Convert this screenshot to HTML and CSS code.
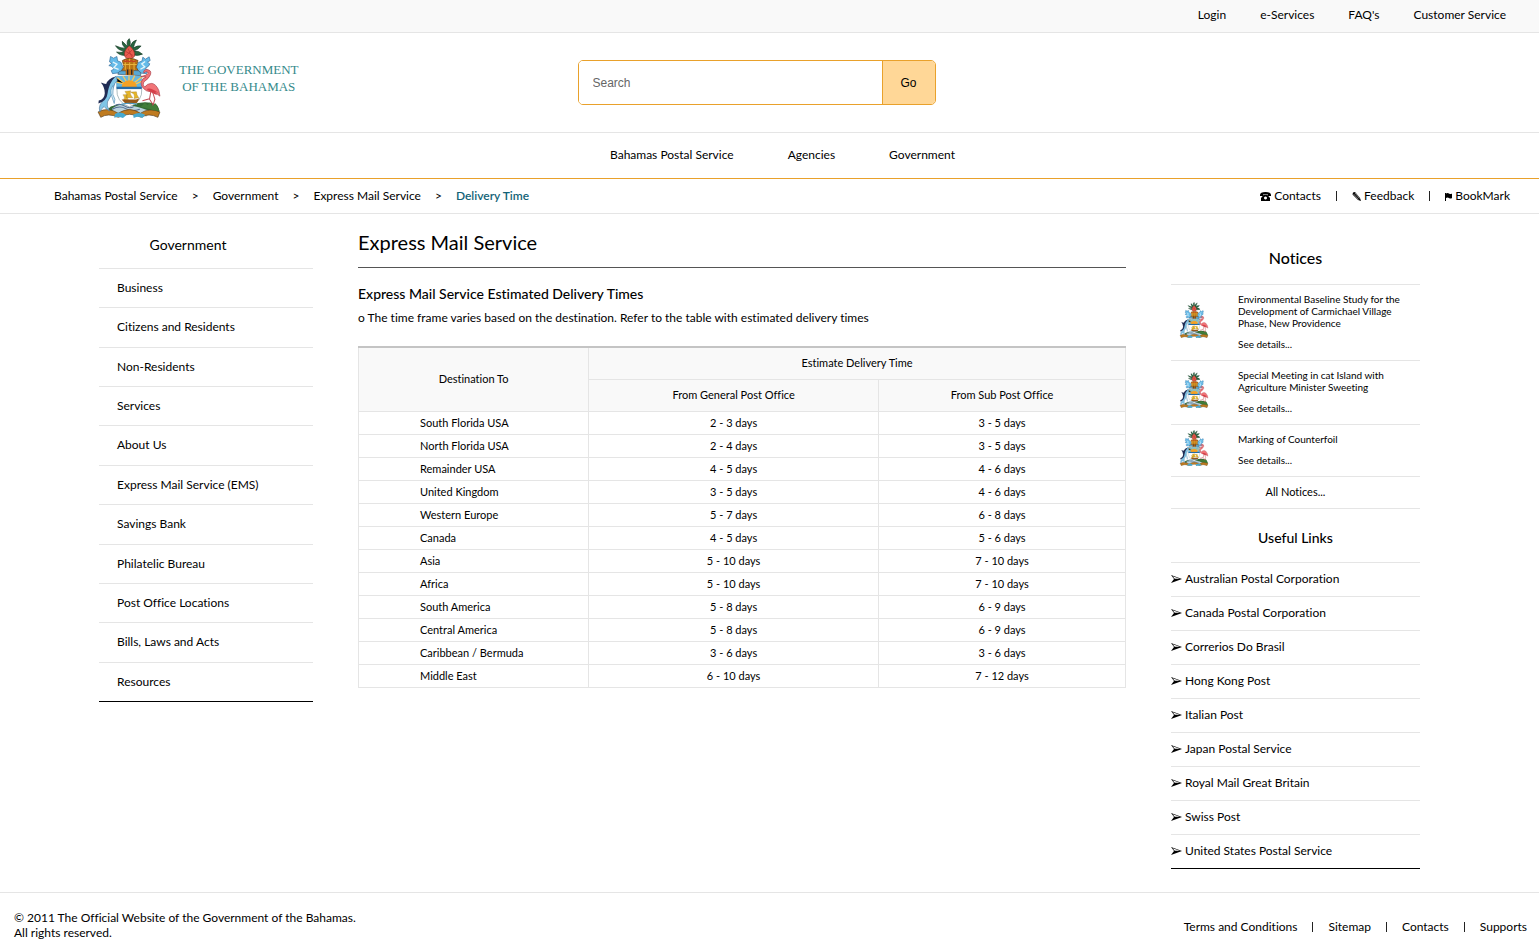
FILE: index.html
```html
<!DOCTYPE html>
<html lang="en">
<head>
<meta charset="utf-8">
<title>Express Mail Service - Delivery Time</title>
<link rel="stylesheet" href="styles.css">
</head>
<body>
<svg class="defs" aria-hidden="true">
  <symbol id="crest" viewBox="22 12 188 238">
    <path d="M62 236Q46 226 62 216Q92 204 120 212Q160 196 196 208Q210 220 204 240Q180 236 150 238Q100 232 62 236Z" fill="#356b35"/>
    <path d="M66 222Q90 202 128 214Q158 220 174 228L168 246Q110 232 70 244Z" fill="#b9d3dd"/>
    <path d="M72 214q14-10 30 0t28 2M66 224q22-12 40-2t42 2" fill="none" stroke="#526c91" stroke-width="3"/>
    <path d="M24 232Q54 216 84 236Q118 214 150 236Q176 218 208 232L202 248Q174 234 152 248Q118 230 84 248Q54 234 32 248Z" fill="#bf7b20" stroke="#5c401c" stroke-width="2"/>
    <path d="M74 238Q94 228 108 242L98 250Q84 244 72 249ZM128 240Q146 230 164 240L156 250Q146 242 130 250Z" fill="#46a9d0"/>
    <path d="M113 62Q93 68 79 54Q95 57 102 51Q84 49 76 35Q94 44 105 42Q93 32 96 22Q107 32 112 38Q107 20 117 14Q122 24 119 38Q126 20 138 18Q131 31 129 42Q141 33 152 36Q144 46 130 51Q145 49 156 60Q141 67 124 61Z" fill="#28663f" stroke="#183c28" stroke-width="2"/>
    <path d="M116 36Q98 50 104 68Q118 82 132 67Q136 50 118 36Z" fill="#e95c4f" stroke="#8e3026" stroke-width="2"/>
    <path d="M106 52l22 12m-3-16-18 17m6-22 13 28" stroke="#b6352f" stroke-width="2"/>
    <path d="M61 67l9 5 10-5 2 13 10 4 6 15-7 16-24 3-4-9 9-5-8-8-8-2 9-7-7-4ZM176 68l-11 7-8-6-2 11-11 5-6 13 8 18 22 2 5-9-8-7 9-6 4-7-7-5 8-5Z" fill="#65bbe9" stroke="#376e9d" stroke-width="2"/>
    <path d="M68 84l12 6-9 10 14 5m79-23-10 7 9 9-13 7" fill="none" stroke="#e5f6fb" stroke-width="4"/>
    <path d="M96 79Q117 66 143 79L137 99L144 110Q119 119 94 110L101 98Z" fill="#b87313" stroke="#633c13" stroke-width="2"/>
    <path d="M105 78v29M118 74v35M131 78v29M99 91h40" stroke="#e9b33c" stroke-width="3"/>
    <path d="M101 79q5 6 10 0q6 7 12 0q7 7 13 0" fill="none" stroke="#c44320" stroke-width="4"/>
    <path d="M83 120Q83 108 102 110L137 109Q153 108 151 124Z" fill="#58a8d5" stroke="#425868" stroke-width="2"/>
    <path d="M106 105h24v17h-24Z" fill="#bd6d15"/>
    <path d="M112 106v15m12-15v15" stroke="#2b2a2a" stroke-width="4"/>
    <path d="M78 126H154V162Q157 202 117 217Q77 202 80 163Z" fill="#fff" stroke="#899da1" stroke-width="2"/>
    <path d="M79 125H154V160H79Z" fill="#65b6df"/>
    <path d="M81 130l27 21-28-8M98 125l15 24m3-25v24m17-24-13 26m34-22-29 22m29-9-28 12" stroke="#f5c85c" stroke-width="4"/>
    <path d="M94 158A23 20 0 0 1 140 158Z" fill="#f4a124"/>
    <path d="M79 157H154V164H79Z" fill="#266ba5"/>
    <path d="M104 171q10 10 3 18l20 1Q116 178 121 169ZM121 173q15 6 10 19l14-2q-7-10-7-18ZM98 181q8 7 2 16l14-2q-7-7-4-15Z" fill="#e5b528" stroke="#957223" stroke-width="1"/>
    <path d="M94 195h43l10-4-7 14q-21 8-37 0Z" fill="#96581a"/>
    <path d="M93 209q24-6 47 0" fill="none" stroke="#4b9fcc" stroke-width="3"/>
    <path d="M77 126Q56 137 54 164Q47 192 30 211Q26 219 29 232Q35 220 42 216Q48 224 58 229Q48 213 52 202Q67 180 69 161Q73 145 81 138Z" fill="#80c6e7" stroke="#54799b" stroke-width="2"/>
    <path d="M75 127Q54 132 48 149Q31 145 31 143Q44 158 44 176Q43 194 26 198L25 207Q50 199 52 178Q55 147 75 127Z" fill="#202c54"/>
    <path d="M69 153Q57 166 65 186L72 207Q78 195 68 180Z" fill="#d5edf7" stroke="#5992b9" stroke-width="2"/>
    <path d="M151 127Q167 124 174 117Q170 108 160 116Q158 106 169 106Q184 107 180 121Q176 132 160 143Q155 153 163 158Q169 147 184 147Q197 149 205 169L208 185L190 171Q178 173 168 169Q151 158 152 145Q154 132 167 128Z" fill="#f17578" stroke="#a93e49" stroke-width="2"/>
    <path d="M168 164Q181 158 204 176L193 172 200 182Q183 177 168 164Z" fill="#d73e48"/>
    <path d="M181 171l-4 23 19 29m-10-51 7 22-8 26m-8-27-21 6" fill="none" stroke="#c44d55" stroke-width="3"/>
    <path d="M156 212l7-8 8 8 7-8 7 10 10-8 6 14 7 10-22-4-20-6-16-3Z" fill="#417d39"/>
  </symbol>
  <symbol id="phone" viewBox="0 0 11 9">
    <path d="M0 3Q0 0 5.500 0Q11 0 11 3V4H8V2.500H3V4H0Z"/>
    <path fill-rule="evenodd" d="M3.500 3H7.500L10 6V9H1V6ZM5.500 4.500a1.500 1.500 0 1 0 .01 0Z"/>
  </symbol>
  <symbol id="pencil" viewBox="0 0 9 9">
    <path d="M1 .5 3 0 8 6 9 9 6 8 .5 2.500Z"/>
    <path d="M1.500 2 6.500 7.500M3 1 7.500 6.500" stroke="#fff" stroke-width=".5"/>
  </symbol>
  <symbol id="flag" viewBox="0 0 7 9">
    <path d="M0 1H1V9H0ZM1 1.500Q2.500 .5 4 1.500T7 1.500V6Q5.500 7 4 6T1 6Z"/>
  </symbol>
  <symbol id="arrow" viewBox="0 0 11 8">
    <path fill-rule="evenodd" d="M0 0 11 4 0 8 3 4ZM1.500 1.200 3.800 3.800H9Z"/>
  </symbol>
</svg>
<nav class="topbar" aria-label="Account">
  <a href="#">Login</a><a href="#">e-Services</a><a href="#">FAQ's</a><a href="#">Customer Service</a>
</nav>
<header class="header">
  <a class="brand" href="#">
    <svg class="brand-crest" aria-hidden="true"><use href="#crest"/></svg>
    <span class="brand-name">THE GOVERNMENT<br>OF THE BAHAMAS</span>
  </a>
  <form class="search">
    <input type="text" placeholder="Search" aria-label="Search">
    <button type="button">Go</button>
  </form>
</header>
<nav class="mainnav" aria-label="Main">
  <a href="#">Bahamas Postal Service</a><a href="#">Agencies</a><a href="#">Government</a>
</nav>
<div class="pathbar">
  <nav class="crumbs" aria-label="Breadcrumb">
    <a href="#">Bahamas Postal Service</a><span>&gt;</span><a href="#">Government</a><span>&gt;</span><a href="#">Express Mail Service</a><span>&gt;</span><a class="current" href="#">Delivery Time</a>
  </nav>
  <div class="tools">
    <a href="#"><svg class="icon-phone" aria-hidden="true"><use href="#phone"/></svg>Contacts</a><i class="bar"></i><a href="#"><svg class="icon-pencil" aria-hidden="true"><use href="#pencil"/></svg>Feedback</a><i class="bar"></i><a href="#"><svg class="icon-flag" aria-hidden="true"><use href="#flag"/></svg>BookMark</a>
  </div>
</div>
<div class="layout">
  <aside class="sidebar">
    <h2>Government</h2>
    <ul>
      <li><a href="#">Business</a></li>
      <li><a href="#">Citizens and Residents</a></li>
      <li><a href="#">Non-Residents</a></li>
      <li><a href="#">Services</a></li>
      <li><a href="#">About Us</a></li>
      <li><a href="#">Express Mail Service (EMS)</a></li>
      <li><a href="#">Savings Bank</a></li>
      <li><a href="#">Philatelic Bureau</a></li>
      <li><a href="#">Post Office Locations</a></li>
      <li><a href="#">Bills, Laws and Acts</a></li>
      <li><a href="#">Resources</a></li>
    </ul>
  </aside>
  <main class="content">
    <h1>Express Mail Service</h1>
    <h2>Express Mail Service Estimated Delivery Times</h2>
    <p>o The time frame varies based on the destination. Refer to the table with estimated delivery times</p>
    <table>
      <colgroup><col class="col-dest"><col class="col-general"><col class="col-sub"></colgroup>
      <thead>
        <tr><th rowspan="2">Destination To</th><th colspan="2">Estimate Delivery Time</th></tr>
        <tr><th>From General Post Office</th><th>From Sub Post Office</th></tr>
      </thead>
      <tbody>
        <tr><td>South Florida USA</td><td>2 - 3 days</td><td>3 - 5 days</td></tr>
        <tr><td>North Florida USA</td><td>2 - 4 days</td><td>3 - 5 days</td></tr>
        <tr><td>Remainder USA</td><td>4 - 5 days</td><td>4 - 6 days</td></tr>
        <tr><td>United Kingdom</td><td>3 - 5 days</td><td>4 - 6 days</td></tr>
        <tr><td>Western Europe</td><td>5 - 7 days</td><td>6 - 8 days</td></tr>
        <tr><td>Canada</td><td>4 - 5 days</td><td>5 - 6 days</td></tr>
        <tr><td>Asia</td><td>5 - 10 days</td><td>7 - 10 days</td></tr>
        <tr><td>Africa</td><td>5 - 10 days</td><td>7 - 10 days</td></tr>
        <tr><td>South America</td><td>5 - 8 days</td><td>6 - 9 days</td></tr>
        <tr><td>Central America</td><td>5 - 8 days</td><td>6 - 9 days</td></tr>
        <tr><td>Caribbean / Bermuda</td><td>3 - 6 days</td><td>3 - 6 days</td></tr>
        <tr><td>Middle East</td><td>6 - 10 days</td><td>7 - 12 days</td></tr>
      </tbody>
    </table>
  </main>
  <aside class="rail">
    <h2 class="notices-title">Notices</h2>
    <article class="notice">
      <svg aria-hidden="true"><use href="#crest"/></svg>
      <div><p>Environmental Baseline Study for the Development of Carmichael Village Phase, New Providence</p><a href="#">See details...</a></div>
    </article>
    <article class="notice">
      <svg aria-hidden="true"><use href="#crest"/></svg>
      <div><p>Special Meeting in cat Island with Agriculture Minister Sweeting</p><a href="#">See details...</a></div>
    </article>
    <article class="notice">
      <svg aria-hidden="true"><use href="#crest"/></svg>
      <div><p>Marking of Counterfoil</p><a href="#">See details...</a></div>
    </article>
    <a class="all-notices" href="#">All Notices...</a>
    <h2 class="links-title">Useful Links</h2>
    <ul>
      <li><a href="#"><svg class="icon-arrow" aria-hidden="true"><use href="#arrow"/></svg>Australian Postal Corporation</a></li>
      <li><a href="#"><svg class="icon-arrow" aria-hidden="true"><use href="#arrow"/></svg>Canada Postal Corporation</a></li>
      <li><a href="#"><svg class="icon-arrow" aria-hidden="true"><use href="#arrow"/></svg>Correrios Do Brasil</a></li>
      <li><a href="#"><svg class="icon-arrow" aria-hidden="true"><use href="#arrow"/></svg>Hong Kong Post</a></li>
      <li><a href="#"><svg class="icon-arrow" aria-hidden="true"><use href="#arrow"/></svg>Italian Post</a></li>
      <li><a href="#"><svg class="icon-arrow" aria-hidden="true"><use href="#arrow"/></svg>Japan Postal Service</a></li>
      <li><a href="#"><svg class="icon-arrow" aria-hidden="true"><use href="#arrow"/></svg>Royal Mail Great Britain</a></li>
      <li><a href="#"><svg class="icon-arrow" aria-hidden="true"><use href="#arrow"/></svg>Swiss Post</a></li>
      <li><a href="#"><svg class="icon-arrow" aria-hidden="true"><use href="#arrow"/></svg>United States Postal Service</a></li>
    </ul>
  </aside>
</div>
<footer class="footer">
  <p>© 2011 The Official Website of the Government of the Bahamas.<br>All rights reserved.</p>
  <nav aria-label="Footer">
    <a href="#">Terms and Conditions</a><i class="bar"></i><a href="#">Sitemap</a><i class="bar"></i><a href="#">Contacts</a><i class="bar"></i><a href="#">Supports</a>
  </nav>
</footer>
</body>
</html>
```

FILE: styles.css
```css
:root {
  --line: #e5e5e5;
  --gold: #e9a12b;
}
* { box-sizing: border-box; }
body {
  margin: 0;
  background: #fff;
  color: #000;
  font: 12px/16px Lato, "Noto Sans", sans-serif;
  font-variant-ligatures: none;
}
a { color: inherit; text-decoration: none; }
h1, h2, p, ul { margin: 0; padding: 0; font-weight: 400; }
ul { list-style: none; }
.defs { display: none; }

.topbar {
  display: flex;
  justify-content: flex-end;
  gap: 34px;
  padding: 7px 33px 9px;
  background: #f9f9f9;
  border-bottom: 1px solid var(--line);
}

.header {
  display: grid;
  grid-template-columns: 1fr 358px 1fr;
  padding: 5px 26px 14px 0;
  border-bottom: 1px solid var(--line);
}
.brand {
  display: flex;
  gap: 18px;
  padding-left: 97px;
}
.brand-crest { width: 64px; height: 80px; }
.brand-name {
  padding-top: 23px;
  color: #358a8b;
  font: 13px/17px "Liberation Serif", serif;
  text-align: center;
}
.search {
  display: flex;
  align-self: start;
  height: 45px;
  margin-top: 22px;
  overflow: hidden;
  border: 1px solid var(--gold);
  border-radius: 5px;
}
.search input {
  flex: 1;
  min-width: 0;
  padding: 0 14px;
  border: 0;
  background: #fff;
  font: 12px "Liberation Sans", sans-serif;
}
.search input::placeholder { color: #666; }
.search button {
  width: 53px;
  padding: 0;
  border: 0;
  border-left: 1px solid var(--gold);
  background: #ffd797;
  color: #000;
  font: 12px "Liberation Sans", sans-serif;
}

.mainnav {
  display: flex;
  justify-content: center;
  gap: 54px;
  padding: 14px 0 15px 26px;
  border-bottom: 1px solid var(--gold);
}

.pathbar {
  display: flex;
  justify-content: space-between;
  padding: 9px 29px 9px 54px;
  border-bottom: 1px solid var(--line);
}
.crumbs, .tools, .footer nav { display: flex; gap: 14px; }
.tools, .footer nav { align-items: center; gap: 15px; }
.tools a, .rail li a { display: flex; align-items: center; }
.tools svg { margin-right: 3px; }
.bar { width: 1px; height: 10px; background: #222; }
.icon-phone { width: 11px; height: 9px; }
.icon-pencil { width: 9px; height: 9px; }
.icon-flag { width: 7px; height: 9px; }
.icon-arrow { width: 11px; height: 8px; margin-right: 3px; }
.current { color: #136377; font-weight: 600; }

.layout {
  display: grid;
  grid-template-columns: 214px 1fr 249px;
  gap: 45px;
  align-items: start;
  padding: 0 119px 23px 99px;
}

.sidebar { padding-top: 21px; }
.sidebar h2 {
  padding: 0 36px 13px 0;
  font-size: 14px;
  line-height: 20px;
  text-align: center;
}
.sidebar ul {
  display: grid;
  grid-auto-rows: 1fr;
  min-height: 434px;
  border-bottom: 1px solid #000;
}
.sidebar li {
  padding: 11px 18px 9px;
  border-top: 1px solid var(--line);
}

.content { padding-top: 13px; }
.content h1 {
  padding-bottom: 10px;
  border-bottom: 1px solid #555;
  font-size: 20px;
  line-height: 30px;
}
.content h2 {
  margin-top: 16px;
  font-size: 14px;
  font-weight: 500;
  line-height: 20px;
}
.content p { margin: 5px 0 19px; line-height: 18px; }
table {
  width: 100%;
  border-collapse: collapse;
  border-top: 2px solid #c4c4c4;
  table-layout: fixed;
  font-size: 11px;
  line-height: 16px;
}
.col-dest { width: 30%; }
.col-general { width: 290px; }
th, td { border: 1px solid var(--line); text-align: center; }
th { padding: 7px 0 8px; background: #f9f9f9; font-weight: 400; }
td { padding: 3px 0; }
td:first-child { padding-left: 61px; text-align: left; }
thead tr:first-child th { border-top: 2px solid #c4c4c4; }

.rail { padding-top: 32px; }
.notices-title {
  padding-bottom: 14px;
  font-size: 16px;
  font-weight: 500;
  line-height: 24px;
  text-align: center;
}
.notice {
  display: grid;
  grid-template-columns: 30px 1fr;
  gap: 29px;
  align-items: center;
  padding: 5px 16px 5px 8px;
  border-top: 1px solid var(--line);
  font-size: 10px;
  line-height: 12px;
}
.notice svg { width: 30px; height: 36px; margin-bottom: 5px; }
.notice div { padding: 3px 0 5px; }
.notice p { margin-bottom: 9px; }
.notice a { display: block; }
.all-notices {
  display: block;
  padding: 7px 0 8px;
  border: solid var(--line);
  border-width: 1px 0;
  font-size: 11px;
  text-align: center;
}
.links-title {
  padding: 19px 0 14px;
  font-size: 14px;
  font-weight: 500;
  line-height: 20px;
  text-align: center;
}
.rail ul { border-bottom: 1px solid #000; }
.rail li {
  padding: 8px 0 9px;
  border-top: 1px solid var(--line);
}

.footer {
  display: flex;
  align-items: center;
  justify-content: space-between;
  padding: 17px 12px 8px 14px;
  border-top: 1px solid var(--line);
}
.footer p { line-height: 15px; }
.footer nav { padding-top: 3px; }
```
